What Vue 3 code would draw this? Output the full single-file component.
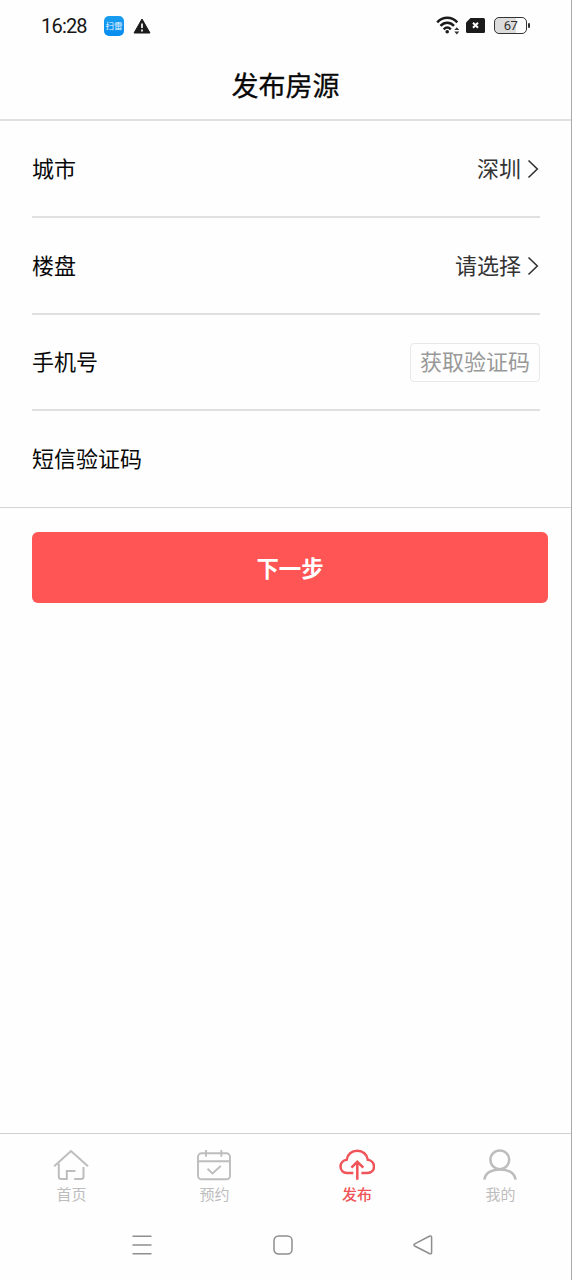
<script setup>
const tabs = [
  { id: 'home', label: '首页' },
  { id: 'booking', label: '预约' },
  { id: 'publish', label: '发布' },
  { id: 'mine', label: '我的' },
]
const active = 'publish'
</script>

<template>
  <div class="screen">
    <div class="status">
      <span class="time">16:28</span>
      <span class="app-icon">扫雷</span>
      <svg class="warn" width="18" height="16" viewBox="0 0 18 16">
        <path d="M9 1 L17 15 H1 Z" fill="#1b1b1b" stroke="#1b1b1b" stroke-width="1" stroke-linejoin="round" />
        <path d="M9 5.5 V10 M9 11.6 V13.4" stroke="#fff" stroke-width="1.7" />
      </svg>
      <span class="spacer"></span>
      <svg class="wifi" width="24" height="19" viewBox="0 0 24 19" fill="none" stroke="#1b1b1b" stroke-width="2.5">
        <path d="M1.2 6.4 C7 .3 15.5 .3 21.3 6.4" />
        <path d="M4.5 9.9 C8.5 5.8 14 5.8 18 9.9" />
        <path d="M7.7 13.3 C10 11 12.5 11 14.8 13.3" />
        <circle cx="11.2" cy="15.8" r="1.8" fill="#1b1b1b" stroke="none" />
        <path d="M18.3 14 L20.8 11.2 L23.3 14 Z M18.3 15.6 L20.8 18.4 L23.3 15.6 Z" fill="#333" stroke="none" />
      </svg>
      <svg class="sim" width="19" height="15" viewBox="0 0 19 15">
        <path d="M4.5 0 H17.5 Q19 0 19 1.5 V13.5 Q19 15 17.5 15 H1.5 Q0 15 0 13.5 V4.5 Z" fill="#1b1b1b" />
        <path d="M7 4.8 L12 9.8 M12 4.8 L7 9.8" stroke="#fff" stroke-width="2" />
      </svg>
      <div class="battery"><span>67</span></div>
    </div>

    <header class="title">发布房源</header>

    <div class="form">
      <div class="row">
        <span>城市</span>
        <div class="value"><span>深圳</span>
          <svg width="12" height="20" viewBox="0 0 12 20"><path d="M1.5 1.5 L10.3 10 L1.5 18.5" /></svg>
        </div>
      </div>
      <div class="row">
        <span>楼盘</span>
        <div class="value"><span>请选择</span>
          <svg width="12" height="20" viewBox="0 0 12 20"><path d="M1.5 1.5 L10.3 10 L1.5 18.5" /></svg>
        </div>
      </div>
      <div class="row">
        <span>手机号</span>
        <button class="code">获取验证码</button>
      </div>
      <div class="row last"><span>短信验证码</span></div>
    </div>

    <button class="next">下一步</button>

    <nav class="tabs">
      <div v-for="t in tabs" :key="t.id" class="tab" :class="{ active: t.id === active }">
        <svg width="36" height="32" viewBox="0 0 36 32">
          <g v-if="t.id === 'home'">
            <path d="M1.2 17.2 L18 2 L35 17.2" />
            <path d="M5.8 14.5 V27.5 Q5.8 30 8.3 30 H13.8 V22 H22.5" />
            <path d="M30.5 18 V27.5 Q30.5 30 28 30 H21.2" />
          </g>
          <g v-else-if="t.id === 'booking'" class="thin">
            <rect x="2" y="4.3" width="32" height="26" rx="3.5" />
            <path d="M2 12.3 H34 M10 1 V7.7 M25.3 1 V7.7 M11.5 19.8 L16.5 24.5 L24.7 17" />
          </g>
          <g v-else-if="t.id === 'publish'" class="bold">
            <path d="M14.3 24 H8 C4.2 24 1.5 21.2 1.5 17.6 C1.5 14 4.1 11.2 7.7 10.7 C8.3 5.3 12.7 1.7 18.3 1.7 C23.8 1.7 28.1 5.3 28.8 10.7 C32.4 11.2 35 14 35 17.6 C35 21.2 32.3 24 28.5 24 H22.4" />
            <path d="M18.3 30.7 V13 M12.4 18.6 L18.3 12.8 L24.3 18.6" />
          </g>
          <g v-else class="bold">
            <circle cx="17.8" cy="10.8" r="9.4" />
            <path d="M2.4 30.7 C3 24.3 9 20.4 17.9 20.4 C26.8 20.4 33 24.3 33.5 30.7" />
          </g>
        </svg>
        <span>{{ t.label }}</span>
      </div>
    </nav>

    <div class="sysnav">
      <svg width="20" height="20" viewBox="0 0 20 20"><path d="M.5 1.3 H19.5 M.5 10 H19.5 M.5 18.7 H19.5" /></svg>
      <svg width="20" height="20" viewBox="0 0 20 20"><rect x="1" y="1" width="18" height="18" rx="4.5" /></svg>
      <svg width="20" height="20" viewBox="0 0 20 20"><path d="M1.7 8.8 L16.3 1.3 Q18.6 .4 18.6 2.6 V17.4 Q18.6 19.6 16.3 18.5 L1.7 11 Q.2 9.9 1.7 8.8 Z" /></svg>
    </div>
  </div>
</template>

<style>
body { margin: 0; background: #fefefe; }
</style>

<style scoped>
.screen {
  box-sizing: border-box;
  width: 572px;
  height: 1280px;
  border-right: 1px solid #a9a9a9;
  background: #fefefe;
  display: flex;
  flex-direction: column;
  overflow: hidden;
  color: #080808;
  font-family: "Noto Sans CJK SC", sans-serif;
}
button { font-family: inherit; margin: 0; padding: 0; }
svg { display: block; flex: none; }
.status {
  box-sizing: border-box;
  height: 51px;
  flex: none;
  display: flex;
  align-items: center;
  padding: 0 44px 0 41px;
}
.time {
  width: 63px;
  padding-top: 1px;
  font: 20px/24px Roboto, sans-serif;
  letter-spacing: -0.8px;
  color: #161616;
}
.app-icon {
  width: 20px;
  height: 20px;
  border-radius: 5px;
  background: linear-gradient(#199df0, #078cf0);
  color: #e8f7ff;
  font-size: 8.5px;
  line-height: 19px;
  text-align: center;
  white-space: nowrap;
}
.warn { margin-left: 8.5px; }
.spacer { flex: 1; }
.wifi { margin: 0 6.5px 1px 0; }
.sim { margin-right: 9px; }
.battery {
  position: relative;
  box-sizing: border-box;
  width: 33px;
  height: 17px;
  border: 1.5px solid #333;
  border-radius: 5px;
  background: linear-gradient(90deg, #dcdcdc 67%, #fefefe 67%);
  font: 13px/15px Roboto, sans-serif;
  letter-spacing: -0.5px;
  color: #333;
  text-align: center;
}
.battery::after {
  content: "";
  position: absolute;
  right: -4px;
  top: 5px;
  width: 2px;
  height: 5px;
  background: #333;
  border-radius: 1px;
}
.title {
  box-sizing: border-box;
  height: 70px;
  flex: none;
  border-bottom: 2px solid #e0e0e0;
  text-align: center;
  font-size: 27px;
  font-weight: 400;
  -webkit-text-stroke: 0.3px currentColor;
  line-height: 67px;
}
.form {
  flex: none;
  padding: 0 31px 0 32px;
  border-bottom: 1px solid #d5d5d5;
}
.row {
  box-sizing: border-box;
  height: 97px;
  border-bottom: 2px solid #e0e0e0;
  display: flex;
  align-items: center;
  justify-content: space-between;
  font-size: 22px;
  line-height: 32px;
}
.row:nth-child(3) { height: 96px; }
.row span { padding-bottom: 4px; }
.last { height: 96px; border-bottom: 0; }
.value { display: flex; align-items: center; gap: 6px; color: #333; margin-right: 1px; }
.value svg { fill: none; stroke: #333; stroke-width: 1.6; }
.code {
  box-sizing: border-box;
  width: 130px;
  height: 39px;
  border: 1.5px solid #e8e8e8;
  border-radius: 4px;
  padding-bottom: 4px;
  background: transparent;
  color: #999;
  font-size: 22px;
  line-height: 32px;
}
.next {
  width: 516px;
  height: 71px;
  flex: none;
  margin: 24px 0 0 32px;
  border: 0;
  border-radius: 6px;
  background: #ff5555;
  color: #fff;
  font-size: 22.4px;
  font-weight: 700;
  line-height: 71px;
}
.tabs {
  box-sizing: border-box;
  height: 77px;
  flex: none;
  margin-top: auto;
  border-top: 1px solid #d0d0d0;
  display: grid;
  grid-template-columns: repeat(4, 143px);
}
.tab {
  display: flex;
  flex-direction: column;
  align-items: center;
  padding-top: 15px;
  color: #bdbdbd;
  font-size: 15px;
  line-height: 22px;
}
.tab svg { fill: none; stroke: currentColor; stroke-width: 2; margin-right: 1px; }
.tab .thin { stroke-width: 1.9; }
.tab .bold { stroke-width: 2.5; }
.tab span { margin-top: 2px; }
.active { color: #f05358; }
.active span { font-weight: 500; margin-right: 1px; }
.sysnav {
  box-sizing: border-box;
  height: 70px;
  flex: none;
  display: flex;
  justify-content: space-between;
  align-items: center;
  padding: 0 138px 0 132px;
}
.sysnav svg { fill: none; stroke: #8e8e8e; stroke-width: 1.5; }
</style>
